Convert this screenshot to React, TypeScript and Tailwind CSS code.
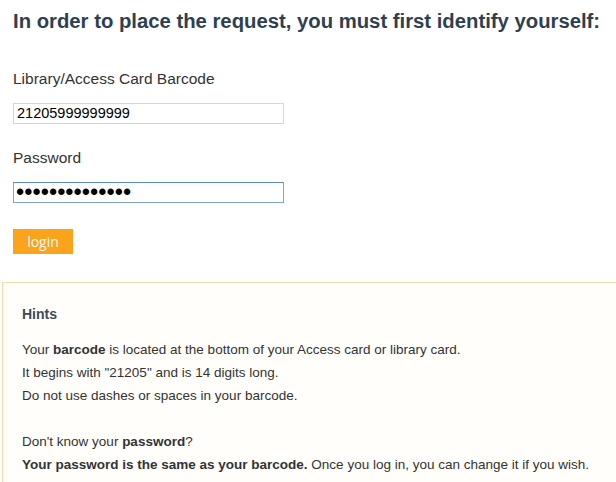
export default function App() {
  return (
    <div className="w-[616px] h-[482px] overflow-hidden bg-white [font-family:'Liberation_Sans',Arial,sans-serif] text-[#333]">
      {/* Login form */}
      <div className="px-[13px] pt-[8px]">
        <h1 className="text-[20.3px] leading-[26px] font-bold text-[#2e3f51] whitespace-nowrap">
          In order to place the request, you must first identify yourself:
        </h1>

        <label className="block mt-[35px] text-[15.5px] leading-[20px]">
          Library/Access Card Barcode
        </label>
        <input
          type="text"
          defaultValue="21205999999999"
          className="block mt-[14px] w-[271px] h-[21px] px-[3px] border border-[#d6d6d6] text-[14.5px] text-black outline-none"
        />

        <label className="block mt-[24px] text-[15.5px] leading-[20px]">Password</label>
        <input
          type="password"
          defaultValue="21205999999999"
          className="block mt-[14px] w-[271px] h-[21px] px-[2px] py-0 border border-[#7ea6d2] border-t-[#5a8cc4] text-[23.5px] leading-[19px] text-black outline-none"
        />

        <button className="block mt-[26px] w-[60px] h-[25px] bg-[#fba31b] text-white text-[14px] [font-family:'Open_Sans',sans-serif]">
          login
        </button>
      </div>

      {/* Hints */}
      <div className="ml-[2px] mt-[28px] w-[640px] border border-[#f6dba9] bg-[#fffefa] pt-[22px] pl-[19px] pb-[20px]">
        <h2 className="text-[14px] leading-[18px] font-bold text-[#3c4a5b]">Hints</h2>
        <div className="mt-[15px] text-[13.5px] leading-[23px]">
          <p>
            Your <b>barcode</b> is located at the bottom of your Access card or library card.
          </p>
          <p>It begins with "21205" and is 14 digits long.</p>
          <p>Do not use dashes or spaces in your barcode.</p>
          <p className="mt-[23px]">
            Don't know your <b>password</b>?
          </p>
          <p>
            <b>Your password is the same as your barcode.</b> Once you log in, you can change it if you wish.
          </p>
        </div>
      </div>
    </div>
  );
}
